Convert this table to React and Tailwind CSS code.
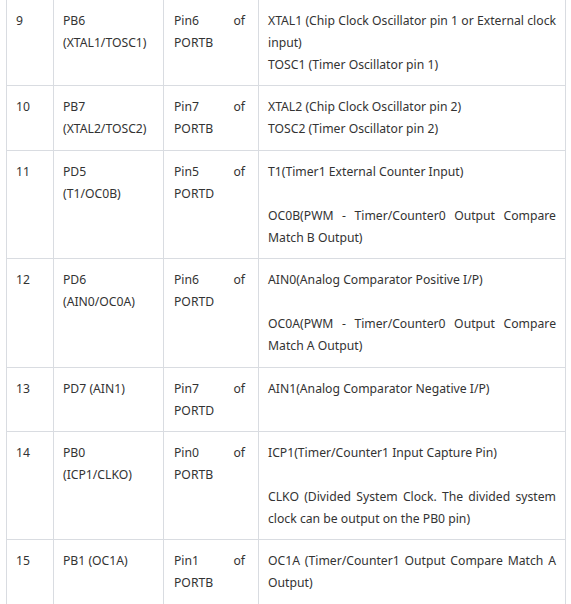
const rows = [
  {
    no: '9',
    pin: ['PB6', '(XTAL1/TOSC1)'],
    port: 'Pin6 of PORTB',
    desc: [['XTAL1 (Chip Clock Oscillator pin 1 or External clock input)', 'TOSC1 (Timer Oscillator pin 1)']],
  },
  {
    no: '10',
    pin: ['PB7', '(XTAL2/TOSC2)'],
    port: 'Pin7 of PORTB',
    desc: [['XTAL2 (Chip Clock Oscillator pin 2)', 'TOSC2 (Timer Oscillator pin 2)']],
  },
  {
    no: '11',
    pin: ['PD5', '(T1/OC0B)'],
    port: 'Pin5 of PORTD',
    desc: [['T1(Timer1 External Counter Input)'], ['OC0B(PWM - Timer/Counter0 Output Compare Match B Output)']],
  },
  {
    no: '12',
    pin: ['PD6', '(AIN0/OC0A)'],
    port: 'Pin6 of PORTD',
    desc: [['AIN0(Analog Comparator Positive I/P)'], ['OC0A(PWM - Timer/Counter0 Output Compare Match A Output)']],
  },
  {
    no: '13',
    pin: ['PD7 (AIN1)'],
    port: 'Pin7 of PORTD',
    desc: [['AIN1(Analog Comparator Negative I/P)']],
  },
  {
    no: '14',
    pin: ['PB0', '(ICP1/CLKO)'],
    port: 'Pin0 of PORTB',
    desc: [['ICP1(Timer/Counter1 Input Capture Pin)'], ['CLKO (Divided System Clock. The divided system clock can be output on the PB0 pin)']],
  },
  {
    no: '15',
    pin: ['PB1 (OC1A)'],
    port: 'Pin1 of PORTB',
    desc: [['OC1A (Timer/Counter1 Output Compare Match A Output)']],
  },
];

export default function App() {
  return (
    <div className="bg-white w-[571px] h-[604px] overflow-hidden pl-[6px] font-['Noto_Sans',sans-serif] text-[12.2px] leading-[22px] text-[#333]">
      <table className="-mt-[1px] w-[559px] border-collapse table-fixed">
        <colgroup>
          <col className="w-[47px]" />
          <col className="w-[110px]" />
          <col className="w-[95px]" />
          <col className="w-[307px]" />
        </colgroup>
        <tbody>
          {rows.map((r) => (
            <tr key={r.no}>
              <td className="border border-[#d9dce1] align-top px-[9px] pt-[10px] pb-[9.4px]">{r.no}</td>
              <td className="border border-[#d9dce1] align-top px-[9px] pt-[10px] pb-[9.4px]">
                {r.pin.map((p) => (
                  <div key={p}>{p}</div>
                ))}
              </td>
              <td className="border border-[#d9dce1] align-top pl-[10px] pr-[13px] pt-[10px] pb-[9.4px] text-justify">{r.port}</td>
              <td className="border border-[#d9dce1] align-top px-[9px] pt-[10px] pb-[9.4px] text-justify">
                {r.desc.map((para, i) => (
                  <div key={i} className={i > 0 ? 'mt-[22px]' : ''}>
                    {para.map((line) => (
                      <div key={line}>{line}</div>
                    ))}
                  </div>
                ))}
              </td>
            </tr>
          ))}
        </tbody>
      </table>
    </div>
  );
}
